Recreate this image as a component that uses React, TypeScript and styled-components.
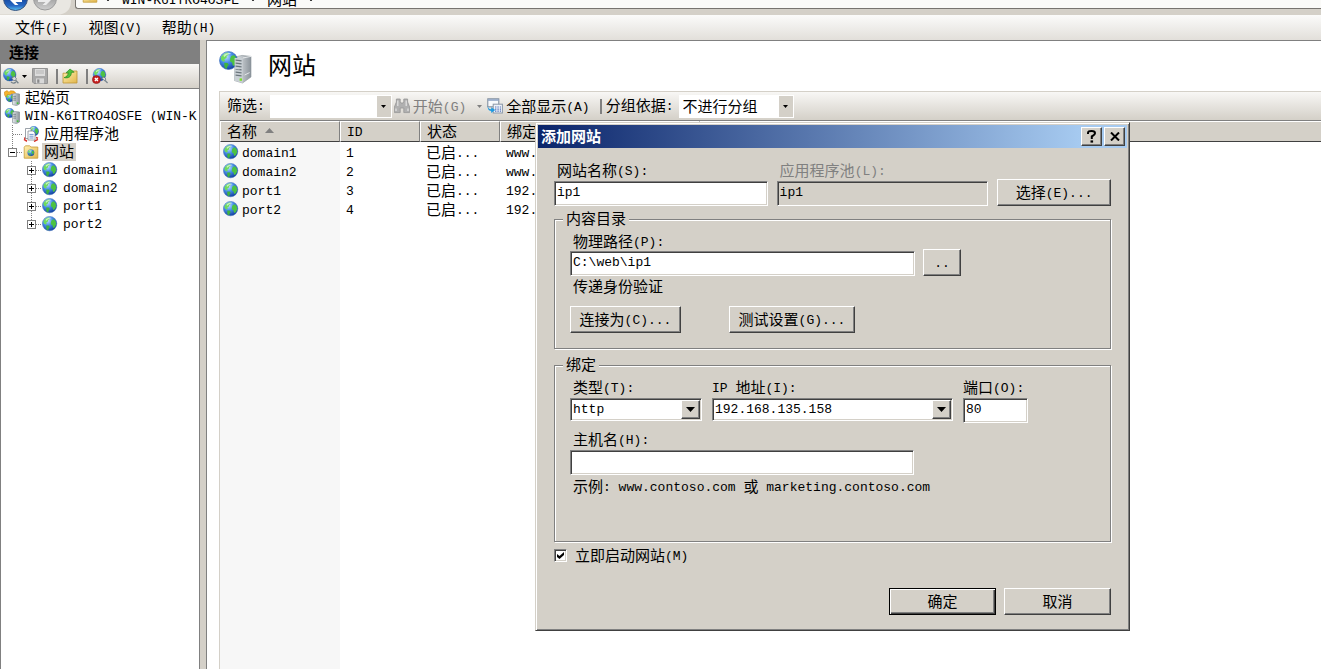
import React from 'react';
import type { ReactNode } from 'react';
import styled, { createGlobalStyle, css } from 'styled-components';

const cjk = '"Noto Sans CJK SC", sans-serif';
const mono = '"Liberation Mono", "Noto Sans CJK SC", monospace';
const face = '#d4d0c8';
const shadow = '#808080';
const dark = '#404040';

const GlobalStyle = createGlobalStyle`
  *, *::before, *::after { box-sizing: border-box; }
  html, body { margin: 0; overflow: hidden; }
  body { background: ${face}; color: #000; font: 15px/16px ${cjk}; }
  button, input, select { font: inherit; color: inherit; margin: 0; border-radius: 0; }
  svg { display: block; flex: none; }
`;

const raised = css`
  background: ${face};
  border: 1px solid;
  border-color: #fff ${dark} ${dark} #fff;
  box-shadow: inset -1px -1px ${shadow};
`;

const sunken = css`
  border: 1px solid;
  border-color: ${shadow} #fff #fff ${shadow};
  box-shadow: inset 1px 1px ${dark}, inset -1px -1px ${face};
`;

/* ---------- text ---------- */

const Latin = styled.span`
  font-family: ${mono};
  font-size: 13px;
  line-height: 0;
  vertical-align: 1px;
`;

const Run = styled.span`
  white-space: pre;
`;

function T({ children }: { children: string }) {
  const parts = children.match(/[\x00-\x7f]+|[^\x00-\x7f]+/g) ?? [];
  return (
    <Run>
      {parts.map((p, i) => (p.charCodeAt(0) < 128 ? <Latin key={i}>{p}</Latin> : p))}
    </Run>
  );
}

/* ---------- icons ---------- */

const HiddenDefs = styled.svg`
  position: absolute;
`;

function Defs() {
  return (
    <HiddenDefs width="0" height="0" aria-hidden="true">
      <defs>
        <radialGradient id="sea" cx="36%" cy="28%" r="75%">
          <stop offset="0" stopColor="#c4e4ff" />
          <stop offset=".45" stopColor="#4a90ea" />
          <stop offset="1" stopColor="#123f9e" />
        </radialGradient>
        <linearGradient id="tower" x1="0" x2="1">
          <stop offset="0" stopColor="#e9edf0" />
          <stop offset="1" stopColor="#8b939a" />
        </linearGradient>
        <linearGradient id="folder" x1="0" y1="0" x2="1" y2="1">
          <stop offset="0" stopColor="#fff0b0" />
          <stop offset="1" stopColor="#e2b64c" />
        </linearGradient>
        <linearGradient id="back" x1="0" y1="0" x2="0" y2="1">
          <stop offset="0.4" stopColor="#123f94" />
          <stop offset="0.8" stopColor="#2668c4" />
          <stop offset="1" stopColor="#5cc4f4" />
        </linearGradient>
        <linearGradient id="forward" x1="0" y1="0" x2="0" y2="1">
          <stop offset="0.4" stopColor="#9a9a9a" />
          <stop offset="1" stopColor="#d0d0d0" />
        </linearGradient>
      </defs>
    </HiddenDefs>
  );
}

function GlobeShape() {
  return (
    <g>
      <circle cx="7.6" cy="7.6" r="7.2" fill="url(#sea)" stroke="#3a6cba" strokeWidth=".5" />
      <path d="M1.4 5.2C2.4 3 4.6 1.6 7.2 1.2L7.8 2.8 6.2 4 6 5.6 4.2 6.6 4.8 8 3.4 8.6 1.8 7.2Z" fill="#6fdc5c" />
      <path d="M4.2 9.4L6.8 9.6 7.8 11 6.6 12.6 6.2 14.4 4.4 13.2Z" fill="#3fb53c" />
      <path d="M9.8 4L12 3.2 13.8 5.4 14.2 8.2 12.8 11.2 11.2 12 10.4 9.2 8.8 8.2 9 5.8Z" fill="#4cc243" />
      <path d="M3.6 3.4C5 1.8 7.6 1.2 9.8 2 7.8 2.4 5.4 3.4 4 5Z" fill="#fff" opacity=".6" />
    </g>
  );
}

function TowerShape() {
  return (
    <g>
      <path d="M8.5 4.5L11 3.5 15.5 4 15.5 14 12.5 15.6 8.5 14.6Z" fill="url(#tower)" stroke="#7b858c" strokeWidth=".6" />
      <path d="M12.6 4.4V15.4" stroke="#aab2b8" strokeWidth=".6" />
      <path d="M9.2 6.3H12M9.2 8.2H12M9.2 10.1H12" stroke="#68737b" strokeWidth=".8" />
      <rect x="12.8" y="12.4" width="1.6" height="1.5" fill="#38c528" />
    </g>
  );
}

const Icon = ({ children }: { children: ReactNode }) => (
  <svg width="16" height="16" viewBox="0 0 16 16" aria-hidden="true">
    {children}
  </svg>
);

const GlobeIcon = () => (
  <Icon>
    <GlobeShape />
  </Icon>
);

const ServerIcon = () => (
  <Icon>
    <g transform="translate(.6 0) scale(.66)">
      <GlobeShape />
    </g>
    <TowerShape />
  </Icon>
);

const StartPageIcon = () => (
  <Icon>
    <g transform="translate(1.6 3) scale(.6)">
      <GlobeShape />
    </g>
    <path d="M.4 2L3 .6 5 2.2 6.4 .8 9.8 1 11.6 3 8.6 3.4 6.4 4.6 3.4 4.4 1.8 7 .6 5Z" fill="#f6b52c" stroke="#c77a10" strokeWidth=".5" />
    <TowerShape />
  </Icon>
);

const SitesHeaderIcon = () => (
  <svg width="34" height="34" viewBox="0 0 34 34" aria-hidden="true">
    <path d="M16 6L23 4.4 32 5.4 32 26 23.5 32 15.5 29.6Z" fill="url(#tower)" stroke="#8c959b" strokeWidth=".6" />
    <path d="M15.8 6.2L23.6 7 23.6 32 15.5 29.6Z" fill="#c9d0d5" />
    <path d="M16.6 9.2L22.6 9.8M16.6 12.2L22.6 12.8M16.6 15.2L22.6 15.8M16.6 18.2L22.6 18.8M16.6 21.2L22.6 21.8M16.6 24.2L22.6 24.8" stroke="#6b757c" strokeWidth="1.2" />
    <path d="M23.8 7L32 5.4M25.6 24L30.6 21.6" stroke="#f4f6f7" strokeWidth=".8" />
    <rect x="20.6" y="27.4" width="2.4" height="2.4" fill="#7be02a" />
    <g transform="scale(1.25)">
      <GlobeShape />
    </g>
    <path d="M15.6 7H20.6V18.4L15.6 18Z" fill="#c9d0d5" />
    <path d="M16.6 9.2L21 9.6M16.6 12.2L21 12.6M16.6 15.2L21 15.6" stroke="#6b757c" strokeWidth="1.2" />
  </svg>
);

const AppPoolIcon = () => (
  <Icon>
    <g transform="translate(5.6 0) scale(.68)">
      <GlobeShape />
    </g>
    <path d="M1 13.4L4 15.2M15 13.4L11 15.4M1 12.2L3 12M15 12.2L13 11.6" stroke="#d8342c" strokeWidth="1.6" />
    <path d="M2.5 2.5H8V12.5H2.5Z" fill="#fff" stroke="#848c94" strokeWidth=".8" />
    <path d="M5 5H10L12 7V14H5Z" fill="#fff" stroke="#848c94" strokeWidth=".8" />
    <path d="M6.4 8.4H10.6M6.4 10.2H10.6M6.4 12H10.6" stroke="#4a76bc" strokeWidth=".8" />
  </Icon>
);

const SiteFolderIcon = () => (
  <Icon>
    <path d="M1.2 3.2L2.4 1.8H6.6L8 3H14.8V14.2H1.2Z" fill="url(#folder)" stroke="#c49a3a" strokeWidth=".8" />
    <g transform="translate(4.4 5.2) scale(.46)">
      <GlobeShape />
    </g>
  </Icon>
);

const ConnectIcon = () => (
  <Icon>
    <g transform="scale(.88)">
      <GlobeShape />
    </g>
    <path d="M8.6 10L11.4 8.6 13.4 10.4 12.6 12.6 10.4 12.4Z" fill="#d5dbe0" stroke="#5d6870" strokeWidth=".7" />
    <path d="M12.6 12.2L15.4 15.2M8 13.8C9.6 15.8 12 15 12.8 14" stroke="#76828a" strokeWidth="1.3" fill="none" />
  </Icon>
);

const SaveIcon = () => (
  <Icon>
    <path d="M.5 .5H15.5V15.5H2L.5 14Z" fill="#a8a8a8" stroke="#949494" />
    <rect x="3" y="1" width="10" height="7" fill="#dcdcdc" />
    <path d="M4 3H12M4 5H12" stroke="#b4b4b4" />
    <rect x="4" y="10.4" width="8" height="5" fill="#d8d8d8" />
    <rect x="5.2" y="11.4" width="2.2" height="3.4" fill="#8a8a8a" />
  </Icon>
);

const UpFolderIcon = () => (
  <Icon>
    <path d="M1 5.2H6L7.4 3H15V15H1Z" fill="url(#folder)" stroke="#bd9436" strokeWidth=".8" />
    <path d="M2 9.6C4.6 9 6 7.4 6.2 4.6L4 4.8 8 1 12.2 4.2 9.4 4.4C9.4 8.4 6.6 10.8 2 9.6Z" fill="#4fc23b" stroke="#217f1b" strokeWidth=".6" />
  </Icon>
);

const DisconnectIcon = () => (
  <Icon>
    <g transform="translate(.8 0) scale(.88)">
      <GlobeShape />
    </g>
    <path d="M9.6 10L12 9 14 11 12.6 12.8Z" fill="#d5dbe0" stroke="#5d6870" strokeWidth=".7" />
    <path d="M12.6 12L15.6 15" stroke="#7b878f" strokeWidth="1.4" />
    <circle cx="4.4" cy="11.6" r="4" fill="#c62020" stroke="#8c1212" strokeWidth=".6" />
    <path d="M2.9 10.1L5.9 13.1M5.9 10.1L2.9 13.1" stroke="#fff" strokeWidth="1.4" />
  </Icon>
);

const FindIcon = () => (
  <Icon>
    <path d="M2.4 1H6.2V4L7 5H9L9.8 4V1H13.6V4L15.6 9V14.6H9.8V10H6.2V14.6H.4V9L2.4 4Z" fill="#b0b0b0" stroke="#969696" strokeWidth=".8" />
    <path d="M2 10.6V13M14 10.6V13M3.8 2.6V8M12.2 2.6V8" stroke="#e4e4e4" strokeWidth="1.2" />
  </Icon>
);

const ShowAllIcon = () => (
  <Icon>
    <rect x=".8" y=".8" width="11" height="8" fill="#f8fafc" stroke="#7a8899" />
    <path d="M1 2H11.6" stroke="#8fa4c4" strokeWidth="1.6" />
    <rect x="6.2" y="6.2" width="9.2" height="8.8" fill="#eef2f8" stroke="#8a97a8" />
    <path d="M8 9H9.4M10.4 9H11.8M12.8 9H14M8 11.2H9.4M10.4 11.2H11.8M12.8 11.2H14M8 13.2H9.4M10.4 13.2H11.8M12.8 13.2H14" stroke="#5672b8" strokeWidth="1.2" />
    <path d="M.8 7.6C.8 10 2 11.2 4.2 11.2V9.2L8.2 12 4.2 15V13C1.4 13 .4 10.6 .8 7.6Z" fill="#1e9ae0" />
  </Icon>
);

const Triangle = ({ up, color = '#000', size = 5 }: { up?: boolean; color?: string; size?: number }) => (
  <svg width={size} height={(size + 1) / 2} viewBox="0 0 10 6" preserveAspectRatio="none" aria-hidden="true">
    <path d={up ? 'M0 6L5 0 10 6Z' : 'M0 0H10L5 6Z'} fill={color} />
  </svg>
);

/* ---------- frame ---------- */

const Window = styled.div`
  position: relative;
  display: flex;
  flex-direction: column;
  height: 100vh;
  overflow: hidden;
`;

const AddressStrip = styled.div`
  display: flex;
  height: 15px;
  overflow: hidden;
  background: ${face};
`;

const AddressBar = styled.div`
  display: flex;
  flex: 1;
  align-items: flex-end;
  height: 9px;
  margin-left: 3px;
  padding: 0 9px 0 6px;
  overflow: hidden;
  background: #fafaf8;
  border: 1px solid #77746f;
  border-width: 0 0 1px 1px;
  border-radius: 0 0 0 3px;
  > svg { margin-bottom: 4px; }
`;

const Crumb = styled.span`
  display: flex;
  align-items: flex-end;
  gap: 12px;
  margin-left: 8px;
  padding-bottom: 1px;
  & + & { margin-left: 12px; }
  svg { margin-bottom: 6px; }
`;

const MenuBar = styled.nav`
  display: flex;
  align-items: center;
  gap: 20px;
  height: 25px;
  padding: 0 0 2px 15px;
  background: linear-gradient(#fbfbfa, #e2dfda);
`;

const FlatButton = styled.button<{ $muted?: boolean }>`
  display: flex;
  align-items: center;
  gap: 3px;
  padding: 0;
  border: 0;
  background: none;
  color: ${p => (p.$muted ? shadow : '#000')};
`;

const Workspace = styled.div`
  display: flex;
  flex: 1;
  min-height: 0;
  gap: 6px;
`;

const SidePane = styled.aside`
  display: flex;
  flex-direction: column;
  width: 200px;
  flex: none;
  border: 1px solid ${shadow};
  border-width: 0 1px;
  background: #fff;
`;

const PaneTitle = styled.h2`
  margin: 0;
  padding: 4px 8px;
  height: 24px;
  background: ${shadow};
  font-size: 15px;
  font-weight: 700;
`;

const SideTools = styled.div`
  display: flex;
  align-items: center;
  height: 25px;
  padding-left: 2px;
  border-bottom: 1px solid ${shadow};
  background: linear-gradient(#f8f7f5, ${face});
`;

const ToolDivider = styled.i`
  width: 2px;
  height: 15px;
  margin: 0 4px 0 8px;
  background: ${shadow};
`;

const Tree = styled.ul`
  flex: 1;
  margin: 0;
  padding: 0 0 0 3px;
  overflow: hidden;
  list-style: none;
`;

const TreeRow = styled.li<{ $level: number }>`
  display: flex;
  align-items: center;
  height: 18px;
  padding-left: ${p => Math.max(0, p.$level - 1) * 19}px;
  white-space: nowrap;
`;

const TreeLabel = styled.span<{ $selected?: boolean }>`
  height: 18px;
  margin-left: 3px;
  padding: 0 2px;
  background: ${p => (p.$selected ? face : 'transparent')};
`;

const Expander = styled.button`
  display: block;
  padding: 0;
  border: 0;
  background: none;
`;

const ContentPane = styled.main`
  display: flex;
  flex: 1;
  flex-direction: column;
  min-width: 0;
  padding-left: 12px;
  border: 1px solid ${shadow};
  border-width: 1px 0 0 1px;
  background: #fff;
`;

const PageHeader = styled.header`
  display: flex;
  align-items: center;
  gap: 15px;
  height: 50px;
  padding-top: 4px;
`;

const PageTitle = styled.h1`
  margin: 0;
  padding-bottom: 8px;
  font-size: 24px;
  font-weight: 400;
  line-height: 32px;
`;

const ListFrame = styled.section`
  display: flex;
  flex: 1;
  flex-direction: column;
  border: 1px solid ${face};
  border-width: 1px 0 0 1px;
  background: linear-gradient(to right, #f7f7f7 120px, #fff 120px);
`;

const ListTools = styled.div`
  display: flex;
  align-items: center;
  height: 29px;
  padding-left: 7px;
  border-bottom: 1px solid ${shadow};
  background: linear-gradient(#f8f7f5, ${face});
  white-space: nowrap;
  label { height: 18px; }
`;

const FlatCombo = styled.span<{ $width: number }>`
  display: flex;
  width: ${p => p.$width}px;
  height: 23px;
  margin-left: 5px;
  padding: 1px;
  position: relative;
  background: #fff;
  input, select {
    flex: 1;
    min-width: 0;
    padding: 0 3px;
    border: 0;
    outline: 0;
    appearance: none;
    background: #fff;
  }
`;

const flatDrop = css`
  display: flex;
  align-items: center;
  justify-content: center;
  width: 14px;
  padding: 0;
  border: 0;
  background: ${face};
`;

const FlatDropButton = styled.button`
  ${flatDrop}
`;

const FlatDropMark = styled.span`
  ${flatDrop}
  position: absolute;
  top: 1px;
  right: 1px;
  bottom: 1px;
  pointer-events: none;
`;

const ToolGroup = styled.div<{ $gap: number; $left: number }>`
  display: flex;
  align-items: center;
  gap: ${p => p.$gap}px;
  margin-left: ${p => p.$left}px;
`;

const SiteTable = styled.table`
  width: 100%;
  table-layout: fixed;
  border-collapse: separate;
  border-spacing: 0;
  th {
    height: 21px;
    padding: 0 6px 2px;
    border: 1px solid;
    border-color: #fff ${shadow} ${dark} #fff;
    background: ${face};
    font-weight: 400;
    text-align: left;
    white-space: nowrap;
  }
  th:last-child { border-right: 0; border-left: 0; }
  td {
    height: 19px;
    padding: 0 7px 0 6px;
    overflow: hidden;
    white-space: nowrap;
  }
  td:first-child { padding-left: 3px; }
`;

const Inline = styled.span<{ $gap: number }>`
  display: flex;
  align-items: center;
  gap: ${p => p.$gap}px;
`;

/* ---------- dialog ---------- */

const Dialog = styled.section`
  position: absolute;
  top: 122px;
  left: 535px;
  width: 595px;
  padding: 2px;
  background: ${face};
  border: 1px solid;
  border-color: ${face} ${dark} ${dark} ${face};
  box-shadow: inset 1px 1px #fff, inset -1px -1px ${shadow};
`;

const TitleBar = styled.header`
  display: flex;
  align-items: center;
  gap: 2px;
  height: 23px;
  padding: 0 2px 0 3px;
  background: linear-gradient(to right, #0a246a, #a6caf0 92%);
  color: #fff;
  h2 { flex: 1; height: 18px; margin: 0; font-size: 15px; font-weight: 700; }
`;

const CaptionButton = styled.button`
  ${raised}
  display: flex;
  align-items: center;
  justify-content: center;
  width: 21px;
  height: 19px;
  padding: 0;
`;

const DialogBody = styled.form`
  padding: 14px 16px 13px;
`;

const Row = styled.div<{ $gap: number; $top?: number; $align?: string; $justify?: string }>`
  display: flex;
  gap: ${p => p.$gap}px;
  margin-top: ${p => p.$top ?? 0}px;
  align-items: ${p => p.$align ?? 'flex-end'};
  justify-content: ${p => p.$justify ?? 'flex-start'};
`;

const Field = styled.div<{ $width: number; $labelHeight?: number; $top?: number; $flush?: boolean }>`
  display: flex;
  flex-direction: column;
  width: ${p => p.$width}px;
  margin-top: ${p => p.$top ?? 0}px;
  label {
    height: ${p => p.$labelHeight ?? 18}px;
    padding-left: ${p => (p.$flush ? 0 : 3)}px;
    white-space: nowrap;
  }
  label:has(+ input:disabled) { color: ${shadow}; }
`;

const TextBox = styled.input`
  ${sunken}
  width: 100%;
  height: 25px;
  padding: 0 2px 2px;
  outline: 0;
  background: #fff;
  font: 13px/18px ${mono};
  &:disabled { background: ${face}; color: #000; }
`;

const Select = styled.span`
  display: flex;
  position: relative;
  select {
    ${sunken}
    width: 100%;
    height: 23px;
    padding: 0 2px;
    outline: 0;
    appearance: none;
    background: #fff;
    font: 13px/18px ${mono};
  }
`;

const SelectMark = styled.span`
  ${raised}
  position: absolute;
  top: 2px;
  right: 2px;
  bottom: 2px;
  display: flex;
  align-items: center;
  justify-content: center;
  width: 19px;
  pointer-events: none;
`;

const PushButton = styled.button<{ $width: number; $primary?: boolean }>`
  ${raised}
  width: ${p => p.$width}px;
  height: 27px;
  padding: 0 0 2px;
  ${p => p.$primary && css`
    border-color: #000;
    box-shadow: inset 1px 1px #fff, inset -1px -1px ${dark}, inset -2px -2px ${shadow};
  `}
`;

const Group = styled.fieldset<{ $top: number; $bottom: number }>`
  min-width: 0;
  margin: ${p => p.$top}px 0 0;
  padding: 5px 15px ${p => p.$bottom}px;
  border: 1px solid ${shadow};
  box-shadow: 1px 1px #fff, inset 1px 1px #fff;
  legend {
    height: 18px;
    margin-left: -7px;
    padding: 0 3px;
    background: ${face};
  }
`;

const Note = styled.p<{ $top: number }>`
  height: 18px;
  margin: ${p => p.$top}px 0 0;
  padding-left: 3px;
`;

const CheckLabel = styled.label`
  display: flex;
  align-items: center;
  gap: 8px;
  height: 18px;
  margin-top: 4px;
`;

const CheckWrap = styled.span`
  display: grid;
  svg, input { grid-area: 1 / 1; place-self: center; }
  svg { z-index: 1; pointer-events: none; visibility: hidden; }
  input:checked + svg { visibility: visible; }
  input {
    ${sunken}
    width: 13px;
    height: 13px;
    appearance: none;
    background: #fff;
  }
`;

/* ---------- tree ---------- */

type Node = {
  label: string;
  level: number;
  icon: ReactNode;
  expand?: 'open' | 'closed';
  last?: boolean;
  selected?: boolean;
};

const tree: Node[] = [
  { label: '起始页', level: 0, icon: <StartPageIcon /> },
  { label: 'WIN-K6ITRO4OSFE (WIN-K', level: 0, icon: <ServerIcon /> },
  { label: '应用程序池', level: 1, icon: <AppPoolIcon /> },
  { label: '网站', level: 1, icon: <SiteFolderIcon />, expand: 'open', last: true, selected: true },
  { label: 'domain1', level: 2, icon: <GlobeIcon />, expand: 'closed' },
  { label: 'domain2', level: 2, icon: <GlobeIcon />, expand: 'closed' },
  { label: 'port1', level: 2, icon: <GlobeIcon />, expand: 'closed' },
  { label: 'port2', level: 2, icon: <GlobeIcon />, expand: 'closed', last: true },
];

function Guide({ expand, last }: { expand?: 'open' | 'closed'; last?: boolean }) {
  return (
    <svg width="19" height="18" viewBox="0 0 19 18" aria-hidden="true" shapeRendering="crispEdges">
      <path d={`M8.5 0V${last ? 9 : 18}M9 9.5H19`} stroke={shadow} strokeDasharray="1 1" fill="none" />
      {expand && (
        <>
          <rect x="4.5" y="5.5" width="8" height="8" fill="#fff" stroke={shadow} />
          <path d={expand === 'open' ? 'M6 9.5H11' : 'M6 9.5H11M8.5 7V12'} stroke="#000" />
        </>
      )}
    </svg>
  );
}

const sites = [
  { name: 'domain1', id: '1', state: '已启...', binding: 'www.' },
  { name: 'domain2', id: '2', state: '已启...', binding: 'www.' },
  { name: 'port1', id: '3', state: '已启...', binding: '192.' },
  { name: 'port2', id: '4', state: '已启...', binding: '192.' },
];

/* ---------- sections ---------- */

function AddressArea() {
  return (
    <AddressStrip>
      <svg width="72" height="15" viewBox="0 0 72 15" aria-hidden="true">
        <path d="M0 0H71C71 8 68 13 60 14.5H0Z" fill="#e9e7e2" />
        <circle cx="15.5" cy="-1.5" r="12" fill="url(#back)" stroke="#38537e" />
        <path d="M15 5L8.5 -1.5H22V2H15.5L18.5 5Z" fill="#fff" />
        <circle cx="45" cy="-1.5" r="11.5" fill="url(#forward)" stroke="#9c9c9c" />
        <path d="M46 5L52.5 -1.5H38V2H45.5L42.5 5Z" fill="#ececec" />
      </svg>
      <AddressBar>
        <SiteFolderIcon />
        <Crumb><Triangle size={4} /><T>WIN-K6ITRO4OSFE</T></Crumb>
        <Crumb><Triangle size={4} /><T>网站</T></Crumb>
        <Crumb><Triangle size={4} /></Crumb>
      </AddressBar>
    </AddressStrip>
  );
}

function Connections() {
  return (
    <SidePane>
      <PaneTitle>连接</PaneTitle>
      <SideTools>
        <FlatButton aria-label="连接到"><ConnectIcon /><Triangle size={5} /></FlatButton>
        <ToolGroup $gap={0} $left={5}>
          <FlatButton aria-label="保存"><SaveIcon /></FlatButton>
          <ToolDivider />
          <FlatButton aria-label="向上"><UpFolderIcon /></FlatButton>
          <ToolDivider />
          <FlatButton aria-label="断开连接"><DisconnectIcon /></FlatButton>
        </ToolGroup>
      </SideTools>
      <Tree>
        {tree.map(n => (
          <TreeRow key={n.label} $level={n.level}>
            {n.level > 0 &&
              (n.expand ? (
                <Expander aria-label={n.label} aria-expanded={n.expand === 'open'}>
                  <Guide expand={n.expand} last={n.last} />
                </Expander>
              ) : (
                <Guide last={n.last} />
              ))}
            {n.icon}
            <TreeLabel $selected={n.selected}><T>{n.label}</T></TreeLabel>
          </TreeRow>
        ))}
      </Tree>
    </SidePane>
  );
}

function SiteList() {
  return (
    <ContentPane>
      <PageHeader>
        <SitesHeaderIcon />
        <PageTitle>网站</PageTitle>
      </PageHeader>
      <ListFrame>
        <ListTools>
          <label htmlFor="filter"><T>筛选:</T></label>
          <FlatCombo $width={122}>
            <input id="filter" />
            <FlatDropButton aria-label="筛选列表"><Triangle size={5} /></FlatDropButton>
          </FlatCombo>
          <ToolGroup $gap={11} $left={2}>
            <FlatButton $muted><FindIcon /><T>开始(G)</T></FlatButton>
            <Triangle size={5} color={shadow} />
          </ToolGroup>
          <ToolGroup $gap={2} $left={5}>
            <FlatButton><ShowAllIcon /><T>全部显示(A)</T></FlatButton>
            <ToolDivider />
          </ToolGroup>
          <label htmlFor="grouping"><T>分组依据:</T></label>
          <FlatCombo $width={115}>
            <select id="grouping"><option>不进行分组</option></select>
            <FlatDropMark><Triangle size={5} /></FlatDropMark>
          </FlatCombo>
        </ListTools>
        <SiteTable>
          <colgroup>
            <col width="120" /><col width="80" /><col width="80" /><col width="200" /><col />
          </colgroup>
          <thead>
            <tr>
              <th><Inline $gap={8}>名称<Triangle up size={9} color={shadow} /></Inline></th>
              <th><T>ID</T></th>
              <th>状态</th>
              <th>绑定</th>
              <th />
            </tr>
          </thead>
          <tbody>
            {sites.map(s => (
              <tr key={s.id}>
                <td><Inline $gap={3}><GlobeIcon /><T>{s.name}</T></Inline></td>
                <td><T>{s.id}</T></td>
                <td><T>{s.state}</T></td>
                <td><T>{s.binding}</T></td>
                <td />
              </tr>
            ))}
          </tbody>
        </SiteTable>
      </ListFrame>
    </ContentPane>
  );
}

function AddSiteDialog() {
  return (
    <Dialog role="dialog" aria-labelledby="dialog-title">
      <TitleBar>
        <h2 id="dialog-title">添加网站</h2>
        <CaptionButton aria-label="帮助">
          <svg width="9" height="13" viewBox="0 0 9 13" aria-hidden="true">
            <path d="M1 4V3C1 1.6 2.2 1 4.5 1S8 1.8 8 3.2 6.6 5.2 4.8 6.4V9" fill="none" stroke="#000" strokeWidth="2" />
            <rect x="3.5" y="10.4" width="2.6" height="2.2" />
          </svg>
        </CaptionButton>
        <CaptionButton aria-label="关闭">
          <svg width="10" height="9" viewBox="0 0 10 9" aria-hidden="true">
            <path d="M1 .5L9 8.5M9 .5L1 8.5" stroke="#000" strokeWidth="2" />
          </svg>
        </CaptionButton>
      </TitleBar>
      <DialogBody onSubmit={e => e.preventDefault()}>
        <Row $gap={9}>
          <Field $width={214} $labelHeight={19}>
            <label htmlFor="site-name"><T>网站名称(S):</T></label>
            <TextBox id="site-name" defaultValue="ip1" />
          </Field>
          <Field $width={212} $labelHeight={19}>
            <label htmlFor="pool"><T>应用程序池(L):</T></label>
            <TextBox id="pool" defaultValue="ip1" disabled />
          </Field>
          <PushButton type="button" $width={114}><T>选择(E)...</T></PushButton>
        </Row>

        <Group $top={4} $bottom={15}>
          <legend>内容目录</legend>
          <Row $gap={8}>
            <Field $width={345}>
              <label htmlFor="path"><T>物理路径(P):</T></label>
              <TextBox id="path" defaultValue="C:\web\ip1" />
            </Field>
            <PushButton type="button" $width={38}><T>..</T></PushButton>
          </Row>
          <Note $top={2}>传递身份验证</Note>
          <Row $gap={48} $top={10}>
            <PushButton type="button" $width={111}><T>连接为(C)...</T></PushButton>
            <PushButton type="button" $width={126}><T>测试设置(G)...</T></PushButton>
          </Row>
        </Group>

        <Group $top={7} $bottom={45}>
          <legend>绑定</legend>
          <Row $gap={10} $align="flex-start">
            <Field $width={132} $labelHeight={19}>
              <label htmlFor="type"><T>类型(T):</T></label>
              <Select>
                <select id="type"><option>http</option></select>
                <SelectMark><Triangle size={9} /></SelectMark>
              </Select>
            </Field>
            <Field $width={241} $labelHeight={19} $flush>
              <label htmlFor="ip"><T>IP 地址(I):</T></label>
              <Select>
                <select id="ip"><option>192.168.135.158</option></select>
                <SelectMark><Triangle size={9} /></SelectMark>
              </Select>
            </Field>
            <Field $width={65} $labelHeight={19} $flush>
              <label htmlFor="port"><T>端口(O):</T></label>
              <TextBox id="port" defaultValue="80" />
            </Field>
          </Row>
          <Field $width={344} $labelHeight={19} $top={8}>
            <label htmlFor="host"><T>主机名(H):</T></label>
            <TextBox id="host" />
          </Field>
          <Note $top={3}><T>示例: www.contoso.com 或 marketing.contoso.com</T></Note>
        </Group>

        <CheckLabel>
          <CheckWrap>
            <input type="checkbox" defaultChecked />
            <svg width="7" height="7" viewBox="0 0 7 7" aria-hidden="true">
              <path d="M0 2V5L2.5 7 7 3V0L2.5 4Z" />
            </svg>
          </CheckWrap>
          <T>立即启动网站(M)</T>
        </CheckLabel>
        <Row $gap={8} $top={24} $justify="flex-end">
          <PushButton type="submit" $width={107} $primary>确定</PushButton>
          <PushButton type="button" $width={107}>取消</PushButton>
        </Row>
      </DialogBody>
    </Dialog>
  );
}

export default function App() {
  return (
    <>
      <GlobalStyle />
      <Window>
        <Defs />
        <AddressArea />
        <MenuBar>
          <FlatButton><T>文件(F)</T></FlatButton>
          <FlatButton><T>视图(V)</T></FlatButton>
          <FlatButton><T>帮助(H)</T></FlatButton>
        </MenuBar>
        <Workspace>
          <Connections />
          <SiteList />
        </Workspace>
        <AddSiteDialog />
      </Window>
    </>
  );
}
